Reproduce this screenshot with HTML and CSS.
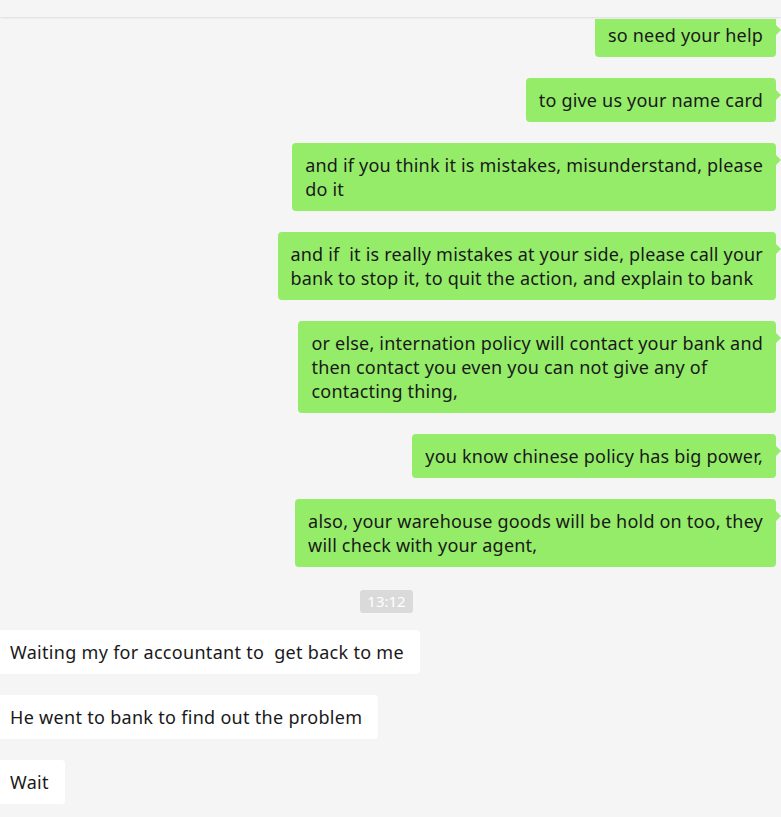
FILE: index.html
```html
<!DOCTYPE html>
<html lang="en">
<head>
  <meta charset="UTF-8">
  <title>Chat</title>
  <link rel="stylesheet" href="styles.css">
</head>
<body>
  <div class="topbar"></div>

  <div class="chat">
    <div class="row mine"><div class="bubble">so need your help</div></div>
    <div class="row mine"><div class="bubble">to give us your name card</div></div>
    <div class="row mine"><div class="bubble">and if you think it is mistakes, misunderstand, please<br>do it</div></div>
    <div class="row mine"><div class="bubble">and if&nbsp; it is really mistakes at your side, please call your<br>bank to stop it, to quit the action, and explain to bank</div></div>
    <div class="row mine"><div class="bubble">or else, internation policy will contact your bank and<br>then contact you even you can not give any of<br>contacting thing,</div></div>
    <div class="row mine"><div class="bubble">you know chinese policy has big power,</div></div>
    <div class="row mine"><div class="bubble">also, your warehouse goods will be hold on too, they<br>will check with your agent,</div></div>

    <div class="time"><span>13:12</span></div>

    <div class="row theirs"><div class="bubble">Waiting my for accountant to&nbsp; get back to me</div></div>
    <div class="row theirs"><div class="bubble">He went to bank to find out the problem</div></div>
    <div class="row theirs"><div class="bubble">Wait</div></div>
  </div>
</body>
</html>
```

FILE: styles.css
```css
body {
  margin: 0;
  background-color: #f5f5f5;
  font-family: "Noto Sans", "Open Sans", sans-serif;
  color: #191919;
  overflow: hidden;
}

/* barra de cima que cobre a primeira mensagem */
.topbar {
  position: absolute;
  top: 0;
  left: 0;
  right: 0;
  height: 17px;
  background-color: #f5f5f5;
  border-bottom: 1px solid #e4e4e4;
  box-shadow: 0 4px 0 -3px #ececec;
  z-index: 2;
}

.chat {
  display: flex;
  flex-direction: column;
  gap: 21px;
  padding-top: 13px;
}

.row {
  display: flex;
}
.row.mine {
  justify-content: flex-end;
  padding-right: 5px;
}
.row.theirs {
  justify-content: flex-start;
  margin-left: -3px;
}

.bubble {
  position: relative;
  padding: 10px 13px;
  font-size: 18px;
  line-height: 24px;
  letter-spacing: 0.2px;
  border-radius: 4px;
  white-space: nowrap;
}
.mine .bubble {
  background-color: #95ec69;
}
.mine .bubble::after {
  content: "";
  position: absolute;
  right: -5px;
  top: 12px;
  border-top: 5px solid transparent;
  border-bottom: 5px solid transparent;
  border-left: 5px solid #95ec69;
}
.theirs .bubble {
  background-color: #ffffff;
  padding-right: 16px;
  letter-spacing: 0.3px;
}

.time {
  display: flex;
  justify-content: center;
  padding-right: 8px;
  margin: 2px 0 -4px;
}
.time span {
  background-color: #dadada;
  color: #ffffff;
  font-size: 15px;
  line-height: 23px;
  padding: 0 7px;
  border-radius: 3px;
}
```
